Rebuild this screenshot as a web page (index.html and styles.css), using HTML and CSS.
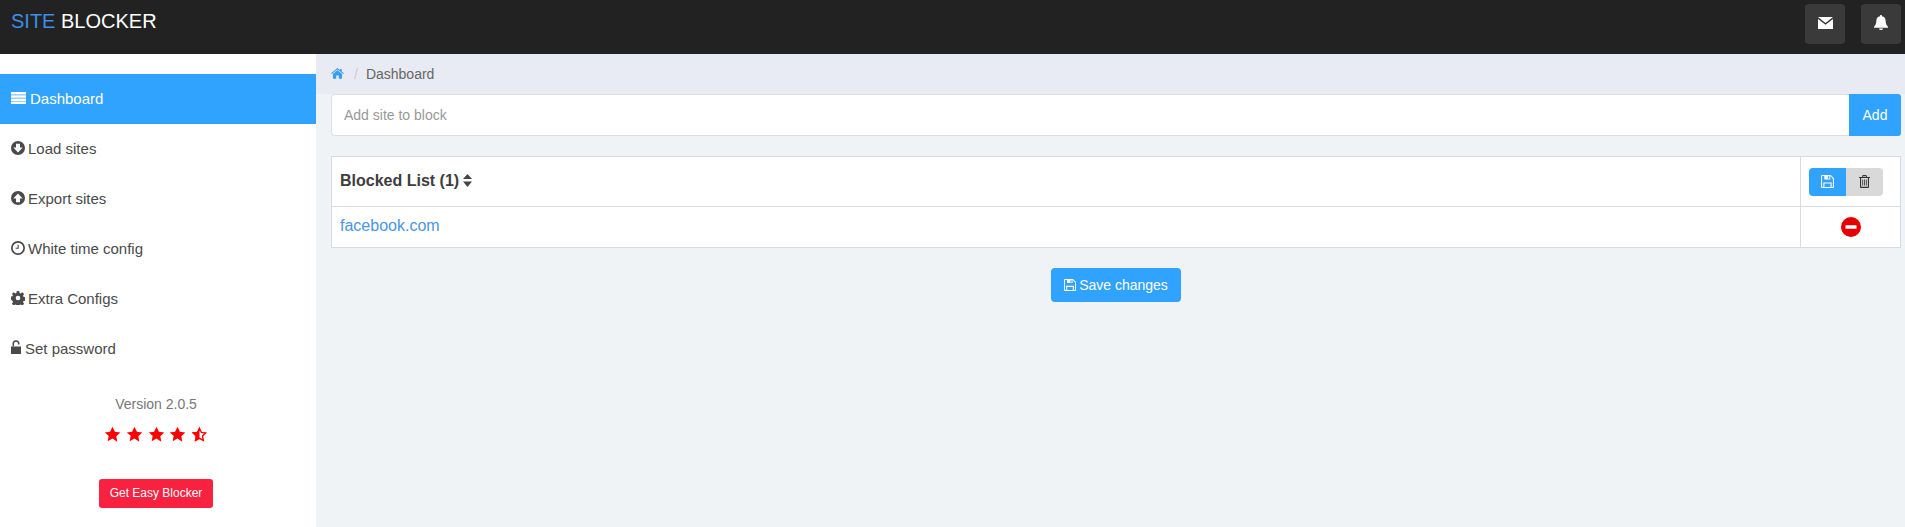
FILE: index.html
```html
<!DOCTYPE html>
<html lang="en">
<head>
<meta charset="utf-8">
<title>Site Blocker</title>
<link rel="stylesheet" href="styles.css">
</head>
<body>
<header class="topbar">
  <div class="brand"><span class="brand-accent">SITE</span> BLOCKER</div>
  <div class="top-actions">
    <button class="top-btn" type="button" aria-label="Messages">
      <svg class="ico-mail" viewBox="0 0 15 12"><path d="M0 0h15L7.500 6z"/><path d="M0 2l7.500 5.800L15 2v10H0z"/></svg>
    </button>
    <button class="top-btn" type="button" aria-label="Notifications">
      <svg class="ico-bell" viewBox="0 0 14 15"><path d="M7 0a1 1 0 0 1 1 1.200c2.400.4 3.600 2.200 3.600 4.400 0 3.200.9 4.600 2.400 6.100v1H0v-1c1.500-1.500 2.400-2.900 2.400-6.100C2.400 3.400 3.600 1.600 6 1.200A1 1 0 0 1 7 0z"/><path d="M5 13.500h4a2 1.500 0 0 1-4 0z"/></svg>
    </button>
  </div>
</header>
<div class="layout">
  <aside class="sidebar">
    <nav class="menu">
      <a class="menu-item active">
        <svg class="ico-bars" viewBox="0 0 15 12"><path d="M0 0h15v2.500H0zM0 3.200h15v2.500H0zM0 6.400h15v2.500H0zM0 9.500h15V12H0z"/></svg>
        Dashboard
      </a>
      <a class="menu-item">
        <svg class="ico" viewBox="0 0 14 14"><path fill-rule="evenodd" d="M7 0a7 7 0 1 1 0 14A7 7 0 0 1 7 0zM5 2.800v3.700H2.300L7 11.400l4.700-4.900H9V2.800z"/></svg>
        Load sites
      </a>
      <a class="menu-item">
        <svg class="ico" viewBox="0 0 14 14"><path fill-rule="evenodd" d="M7 0a7 7 0 1 1 0 14A7 7 0 0 1 7 0zM5 11.200V7.500H2.300L7 2.600l4.700 4.900H9v3.700z"/></svg>
        Export sites
      </a>
      <a class="menu-item">
        <svg class="ico" viewBox="0 0 14 14"><path fill-rule="evenodd" d="M7 0a7 7 0 1 1 0 14A7 7 0 0 1 7 0zm0 1.700a5.300 5.300 0 1 0 0 10.600A5.300 5.300 0 0 0 7 1.700zM6.600 3.800h1.100v4H4.600V6.800h2z"/></svg>
        White time config
      </a>
      <a class="menu-item">
        <svg class="ico" viewBox="0 0 14 14"><path fill-rule="evenodd" d="M5.800 0h2.400l.4 1.900 1.100.5 1.700-1.100 1.700 1.700-1.100 1.700.5 1.100 1.500.4v3.600l-1.500.2-.5 1.100 1.100 1.700-1.700 1.700-1.700-1.100-1.100.5-.4 1.900H5.800l-.4-1.900-1.100-.5-1.700 1.100-1.700-1.700 1.100-1.700-.5-1.100L0 8.600V5.400l1.500-.2.500-1.100L.9 3l1.700-1.700 1.700 1.100 1.100-.5zM7 4.700a2.300 2.300 0 1 0 0 4.600 2.300 2.300 0 0 0 0-4.600z"/></svg>
        Extra Configs
      </a>
      <a class="menu-item">
        <svg class="ico-lock" viewBox="0 0 10 14"><path d="M0 6.500h10V14H0z"/><path d="M1.500 6.500V3.800a3.500 3.500 0 0 1 7 0V4.500H7V3.800a2 2 0 0 0-4 0v2.700z"/></svg>
        Set password
      </a>
    </nav>
    <div class="side-foot">
      <p class="version">Version 2.0.5</p>
      <div class="stars">
        <svg class="star" viewBox="0 0 24 24"><path d="M12 1l3.400 7.200 7.600 1-5.600 5.400 1.400 7.800L12 17.600l-6.800 3.800 1.400-7.800L1 9.200l7.600-1z"/></svg>
        <svg class="star" viewBox="0 0 24 24"><path d="M12 1l3.400 7.200 7.600 1-5.600 5.400 1.400 7.800L12 17.600l-6.800 3.800 1.400-7.800L1 9.200l7.600-1z"/></svg>
        <svg class="star" viewBox="0 0 24 24"><path d="M12 1l3.400 7.200 7.600 1-5.600 5.400 1.400 7.800L12 17.600l-6.800 3.800 1.400-7.800L1 9.200l7.600-1z"/></svg>
        <svg class="star" viewBox="0 0 24 24"><path d="M12 1l3.400 7.200 7.600 1-5.600 5.400 1.400 7.800L12 17.600l-6.800 3.800 1.400-7.800L1 9.200l7.600-1z"/></svg>
        <svg class="star" viewBox="0 0 24 24"><path d="M12 1v16.600l-6.800 3.800 1.400-7.800L1 9.200l7.600-1z"/><path class="star-outline" d="M12 3.500l2.700 5.600 6 .8-4.400 4.300 1.100 6.100L12 17.400l-5.400 3 1.100-6.100-4.400-4.300 6-.8z"/></svg>
      </div>
      <a class="get-btn">Get Easy Blocker</a>
    </div>
  </aside>
  <main class="main">
    <div class="crumbs">
      <svg class="ico-home" viewBox="0 0 14 12"><path d="M7 2.400l5 4.100V11a.6.6 0 0 1-.6.6H8.400V8.200H5.600v3.400H2.600A.6.6 0 0 1 2 11V6.500z"/><path d="M7 0l3 2.500V1h1.600v2.800L14 5.800l-.7.800L7 1.500.7 6.600 0 5.800z"/></svg>
      <span class="crumb-sep">/</span>
      <span class="crumb-text">Dashboard</span>
    </div>
    <div class="content">
      <form class="add-row">
        <input class="add-input" type="text" placeholder="Add site to block">
        <button class="add-btn" type="button">Add</button>
      </form>
      <table class="list">
        <thead>
          <tr>
            <th class="list-title">Blocked List (1)
              <svg class="ico-sort" viewBox="0 0 9 13"><path d="M4.500 0L9 5H0zM0 7.500h9L4.500 13z"/></svg>
            </th>
            <th class="list-actions">
              <div class="btn-group">
                <button class="grp-btn grp-save" type="button" aria-label="Save">
                  <svg class="ico-save" viewBox="0 0 14 14"><path fill-rule="evenodd" d="M1.200 0h9.300L14 3.500v9.300a1.200 1.200 0 0 1-1.200 1.200H1.200A1.200 1.200 0 0 1 0 12.800V1.200A1.200 1.200 0 0 1 1.200 0zM1.200 1.200v11.600h1.300V8h9v4.800h1.300V4L10.300 1.200H10v3.600H3.500V1.200zM3.700 9.200v3.600h6.600V9.200zM7.500 1.400v2.700h1.400V1.400z"/></svg>
                </button>
                <button class="grp-btn grp-trash" type="button" aria-label="Delete">
                  <svg class="ico-trash" viewBox="0 0 12 14"><path fill-rule="evenodd" d="M4 0h4l.8 2H12v1.200h-1.100V13a1 1 0 0 1-1 1H2.100a1 1 0 0 1-1-1V3.200H0V2h3.200zM4.500 1.200L4.200 2h3.600l-.3-.8zM2.300 3.200v9.600h7.400V3.200zM3.600 4.800h.9v6.600h-.9zM5.550 4.800h.9v6.600h-.9zM7.500 4.800h.9v6.600h-.9z"/></svg>
                </button>
              </div>
            </th>
          </tr>
        </thead>
        <tbody>
          <tr>
            <td class="site-cell"><a class="site-link">facebook.com</a></td>
            <td class="remove-cell">
              <svg class="ico-remove" viewBox="0 0 20 20"><path fill-rule="evenodd" d="M10 0a10 10 0 1 1 0 20A10 10 0 0 1 10 0zM4.500 8.200v3.600h11V8.200z"/></svg>
            </td>
          </tr>
        </tbody>
      </table>
      <div class="save-row">
        <button class="save-btn" type="button">
          <svg class="ico-save-sm" viewBox="0 0 14 14"><path fill-rule="evenodd" d="M1.200 0h9.300L14 3.500v9.300a1.200 1.200 0 0 1-1.200 1.200H1.200A1.200 1.200 0 0 1 0 12.800V1.200A1.200 1.200 0 0 1 1.200 0zM1.200 1.200v11.600h1.300V8h9v4.800h1.300V4L10.300 1.200H10v3.600H3.500V1.200zM3.700 9.200v3.600h6.600V9.200zM7.500 1.400v2.700h1.400V1.400z"/></svg>
          Save changes
        </button>
      </div>
    </div>
  </main>
</div>
</body>
</html>
```
FILE: styles.css
```css
* { box-sizing: border-box; }
html, body { margin: 0; height: 100%; }
body {
  font-family: "Liberation Sans", Arial, sans-serif;
  font-size: 14px;
  color: #444;
  background: #f0f3f6;
  overflow: hidden;
}
button { font-family: inherit; cursor: pointer; }

.topbar {
  height: 54px;
  background: #222;
  display: flex;
  justify-content: space-between;
  padding: 4px 4px 0 11px;
}
.brand { font-size: 20px; line-height: 36px; margin-top: -1px; height: 36px; color: #fff; }
.brand-accent { color: #3b8fe6; }
.top-actions { display: flex; gap: 16px; }
.top-btn {
  width: 40px; height: 40px;
  border: 0; border-radius: 4px;
  background: #3a3a3a;
  color: #fff;
  display: flex; align-items: center; justify-content: center;
  padding: 0;
}
.top-btn svg { fill: currentColor; display: block; }
.ico-mail { width: 15px; height: 12px; margin-bottom: 2px; }
.ico-bell { width: 14px; height: 15px; margin-bottom: 4px; }

.layout { display: flex; height: calc(100% - 54px); }
.sidebar { width: 316px; flex: none; background: #fff; padding-top: 20px; }
.menu-item {
  display: flex; align-items: center; gap: 4px;
  height: 50px;
  padding: 0 0 2px 11px;
  font-size: 15px;
  color: #4a4a4a;
}
.menu-item svg { fill: currentColor; flex: none; }
.menu-item.active { background: #30a2ff; color: #fff; gap: 4px; }
.ico { width: 14px; height: 14px; margin-right: -1px; }
.ico-bars { width: 15px; height: 12px; }
.ico-lock { width: 10px; height: 14px; margin-bottom: 2px; }

.side-foot { text-align: center; padding: 20px 4px 0 0; }
.version { margin: 0; line-height: 20px; color: #777; }
.stars { display: flex; justify-content: center; gap: 4.700px; margin-top: 12px; height: 17px; }
.star { width: 17px; height: 17px; fill: #f00; display: block; }
.star-outline { fill: none; stroke: #f00; stroke-width: 2; }
.get-btn {
  display: block;
  margin: 36px auto 0;
  width: 114px; height: 29px;
  line-height: 29px;
  border-radius: 3px;
  background: #f8213f;
  color: #fff;
  font-size: 12px;
}

.main { flex: 1; min-width: 0; }
.crumbs {
  height: 40px;
  background: #e8ebf3;
  padding: 0 15px;
  display: flex; align-items: center;
  color: #666;
}
.ico-home { width: 13px; height: 11px; fill: #3b9bf0; margin-bottom: 1px; }
.crumb-sep { margin: 0 8px 0 10px; color: #ccc; }
.content { padding: 0 4px 0 15px; }
.add-row { display: flex; align-items: stretch; height: 42px; }
.add-input {
  flex: 1; min-width: 0;
  height: 42px;
  border: 1px solid #dcdfe3;
  border-right: 0;
  border-radius: 4px 0 0 4px;
  background: #fff;
  padding: 0 12px;
  font: inherit;
  color: #444;
  outline: none;
}
.add-input::placeholder { color: #999; opacity: 1; }
.add-btn {
  width: 52px;
  border: 0;
  border-radius: 0 3px 3px 0;
  background: #30a2ff;
  color: #fff;
  font-size: 14px;
  padding: 0;
}
.list {
  width: 100%;
  margin-top: 20px;
  border-collapse: collapse;
  table-layout: fixed;
  background: #fff;
}
.list th, .list td { border: 1px solid #d8dce0; padding: 0; }
.list-title {
  height: 50px;
  padding: 0 0 2px 8px !important;
  text-align: left;
  font-size: 16px;
  color: #3d3d3d;
}
.ico-sort { width: 9px; height: 13px; fill: #444; margin-left: -1px; vertical-align: -1px; }
.list-actions { width: 100px; }
.btn-group { display: flex; margin: 0 0 0 8px; width: 74px; height: 28px; }
.grp-btn {
  width: 37px; height: 28px;
  border: 0; padding: 0;
  display: flex; align-items: center; justify-content: center;
}
.grp-save { background: #30a2ff; border-radius: 4px 0 0 4px; }
.grp-trash { background: #d9d9d9; border-radius: 0 4px 4px 0; }
.ico-save { width: 13px; height: 13px; fill: #fff; }
.ico-trash { width: 11px; height: 13px; fill: #333; }
.site-cell { height: 41px; padding: 0 0 2px 8px !important; font-size: 16px; }
.site-link { color: #4a96e0; }
.remove-cell { text-align: center; }
.ico-remove { display: block; width: 20px; height: 20px; margin: -1px 0 0 40px; fill: #e60000; }
.save-row { display: flex; justify-content: center; margin-top: 20px; }
.save-btn {
  width: 130px; height: 34px;
  border: 0; border-radius: 4px;
  background: #30a2ff;
  color: #fff;
  font-size: 14px;
  display: flex; align-items: center; justify-content: center; gap: 3px;
  padding: 0;
}
.ico-save-sm { width: 12px; height: 12px; fill: #fff; }
```
